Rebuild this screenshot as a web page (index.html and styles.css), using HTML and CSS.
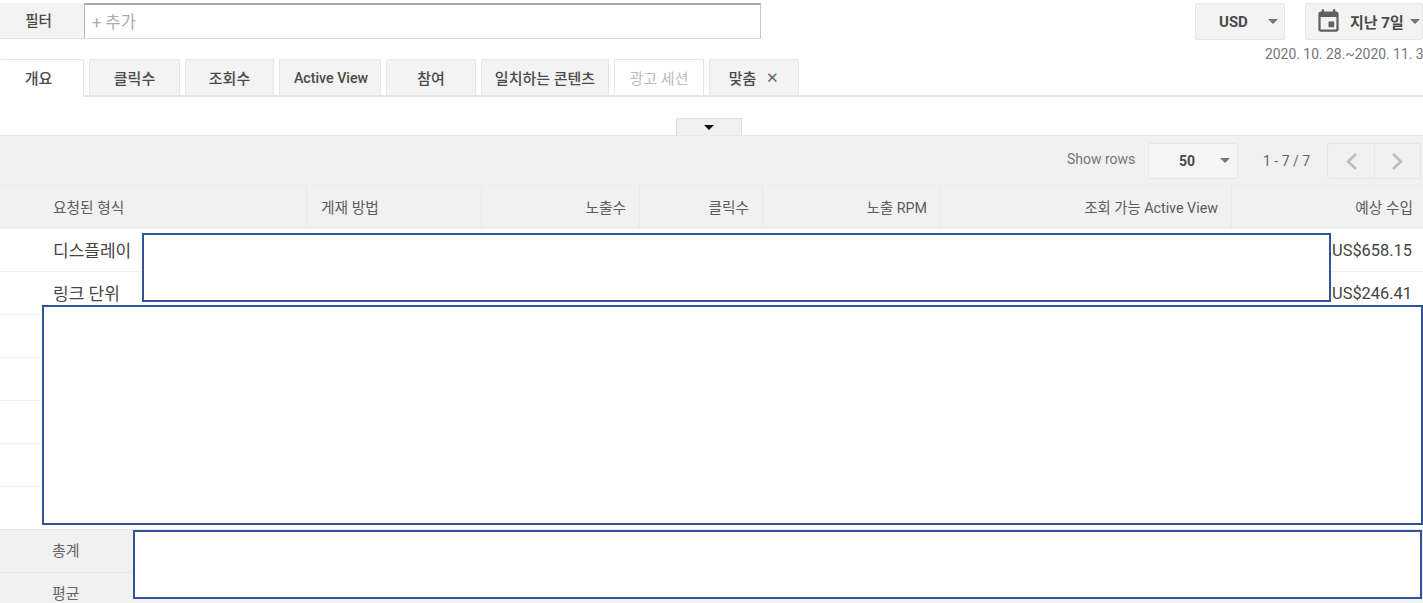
FILE: index.html
```html
<!DOCTYPE html>
<html lang="ko">
<head>
<meta charset="utf-8">
<title>보고서</title>
<link rel="stylesheet" href="styles.css">
</head>
<body>
<div class="page">
  <div class="toolbar">
    <div class="filter-label">필터</div>
    <div class="filter-input">+ 추가</div>
    <div class="toolbar-right">
      <div class="btn btn-usd"><span class="btn-text">USD</span><span class="caret"></span></div>
      <div class="btn btn-date">
        <svg class="cal" viewBox="0 0 24 24" width="27" height="27"><path fill="#616161" d="M17 12h-5v5h5v-5zM16 1v2H8V1H6v2H5c-1.11 0-1.99.9-1.99 2L3 19c0 1.1.89 2 2 2h14c1.1 0 2-.9 2-2V5c0-1.1-.9-2-2-2h-1V1h-2zm3 18H5V8h14v11z"/></svg>
        <span class="btn-text">지난 7일</span><span class="caret"></span>
      </div>
    </div>
  </div>
  <div class="date-range">2020. 10. 28.~2020. 11. 3</div>
  <div class="tabs">
    <div class="tab tab-active w84">개요</div>
    <div class="tab w91">클릭수</div>
    <div class="tab w89">조회수</div>
    <div class="tab tab-latin w102">Active View</div>
    <div class="tab w90">참여</div>
    <div class="tab w128">일치하는 콘텐츠</div>
    <div class="tab tab-disabled w90">광고 세션</div>
    <div class="tab w90">맞춤<span class="tab-x">✕</span></div>
  </div>
  <div class="expander-row"><div class="expander"><span class="caret-dark"></span></div></div>
  <div class="pager">
    <span class="pager-label">Show rows</span>
    <div class="btn btn-rows"><span class="btn-text">50</span><span class="caret"></span></div>
    <span class="pager-count">1 - 7 / 7</span>
    <div class="pager-nav">
      <div class="nav-btn"><svg viewBox="0 0 16 20" width="16" height="20"><path d="M13 3 5 10.500l8 7.500" fill="none" stroke="#bdbdbd" stroke-width="2.600"/></svg></div>
      <div class="nav-btn"><svg viewBox="0 0 16 20" width="16" height="20"><path d="m3 3 8 7.500-8 7.500" fill="none" stroke="#bdbdbd" stroke-width="2.600"/></svg></div>
    </div>
  </div>
  <div class="grid">
    <div class="row head">
      <div class="cell c1">요청된 형식</div><div class="cell c2">게재 방법</div><div class="cell c3 num">노출수</div><div class="cell c4 num">클릭수</div><div class="cell c5 num">노출 RPM</div><div class="cell c6 num">조회 가능 Active View</div><div class="cell c7 num">예상 수입</div>
    </div>
    <div class="row body">
      <div class="cell c1">디스플레이</div><div class="cell c2"></div><div class="cell c3"></div><div class="cell c4"></div><div class="cell c5"></div><div class="cell c6"></div><div class="cell c7 num">US$658.15</div>
    </div>
    <div class="row body">
      <div class="cell c1">링크 단위</div><div class="cell c2"></div><div class="cell c3"></div><div class="cell c4"></div><div class="cell c5"></div><div class="cell c6"></div><div class="cell c7 num">US$246.41</div>
    </div>
    <div class="row body"></div>
    <div class="row body"></div>
    <div class="row body"></div>
    <div class="row body"></div>
    <div class="row body"></div>
    <div class="row foot"><div class="cell c1">총계</div></div>
    <div class="row foot"><div class="cell c1">평균</div></div>
  </div>
  <div class="mask mask-a"></div>
  <div class="mask mask-b"></div>
  <div class="mask mask-c"></div>
</div>
</body>
</html>
```
FILE: styles.css
```css
* { box-sizing: border-box; }
html, body { margin: 0; padding: 0; background: #fff; }
body { font-family: Roboto, "Noto Sans CJK KR", sans-serif; color: #444; overflow: hidden; }
.page { position: relative; width: 1423px; height: 603px; overflow: hidden; }

.toolbar { display: flex; height: 40px; padding-top: 3px; }
.filter-label { width: 84px; height: 36px; background: #f3f3f3; border-bottom: 1px solid #e4e4e4; font-size: 14.500px; font-weight: 500; color: #4a4a4a; display: flex; align-items: center; justify-content: center; padding: 0 7px 2px 0; }
.filter-input { width: 677px; height: 36px; border: 1px solid #c6c6c6; border-top: 2px solid #a8a8a8; border-left-color: #b8b8b8; border-bottom-color: #d8d8d8; font-size: 16.500px; color: #aaa; display: flex; align-items: center; padding: 0 0 2px 7px; background: #fff; }
.toolbar-right { display: flex; margin-left: auto; gap: 20px; }

.btn { display: flex; align-items: center; background: #f3f3f3; border: 1px solid #e6e6e6; border-radius: 2px; height: 37px; }
.btn-text { font-size: 15px; font-weight: 700; color: #4a4a4a; }
.caret { width: 0; height: 0; border-left: 5px solid transparent; border-right: 5px solid transparent; border-top: 5px solid #757575; }
.btn-usd { width: 90px; padding-left: 23px; gap: 20px; }
.btn-date { width: 118px; padding-left: 9px; }
.btn-date .cal { margin-right: 8px; }
.btn-date .caret { margin-left: 6px; }

.date-range { height: 19px; font-size: 13.900px; color: #757575; white-space: nowrap; padding-left: 1265px; line-height: 29px; }

.tabs { display: flex; gap: 5px; height: 38px; border-bottom: 2px solid #e6e6e6; }
.tab { height: 36px; background: #f3f3f3; border: 1px solid #e6e6e6; border-bottom: 0; border-radius: 2px 2px 0 0; font-size: 15px; font-weight: 500; color: #4a4a4a; display: flex; align-items: center; justify-content: center; }
.tab-latin { font-size: 14.200px; padding-left: 2px; }
.tab-active { height: 38px; background: #fff; border-left: 0; position: relative; z-index: 1; padding: 0 6px 2px 0; }
.tab-disabled { background: #fff; color: #bbb; font-weight: 400; }
.tab-x { margin-left: 10px; font-size: 15px; color: #666; font-weight: 400; }
.w84 { width: 84px; }
.w89 { width: 89px; }
.w91 { width: 91px; }
.w90 { width: 90px; }
.w102 { width: 102px; }
.w128 { width: 128px; }

.expander-row { height: 38px; display: flex; align-items: flex-end; padding-left: 676px; }
.expander { width: 66px; height: 17px; background: #f1f1f1; border: 1px solid #dedede; border-bottom: 0; display: flex; align-items: center; justify-content: center; }
.caret-dark { width: 0; height: 0; border-left: 5px solid transparent; border-right: 5px solid transparent; border-top: 5px solid #111; }

.pager { height: 50px; background: #f1f1f1; border-top: 1px solid #e8e8e8; display: flex; align-items: center; padding-left: 1067px; }
.pager-label { font-size: 14px; color: #757575; width: 81px; padding-bottom: 3px; }
.btn-rows { width: 90px; height: 36px; padding-left: 30px; gap: 25px; background: #f5f5f5; }
.btn-rows .btn-text { font-size: 14px; }
.pager-count { font-size: 14px; color: #666; margin-left: 25px; width: 64px; }
.pager-nav { display: flex; height: 36px; border: 1px solid #e6e6e6; border-radius: 2px; }
.nav-btn { width: 46px; display: flex; align-items: center; justify-content: center; }
.nav-btn + .nav-btn { border-left: 1px solid #e6e6e6; }

.grid { display: flex; flex-direction: column; }
.row { display: flex; height: 43px; font-size: 14.700px; }
.cell { display: flex; align-items: center; height: 100%; white-space: nowrap; }
.c1 { width: 307px; padding-left: 53px; }
.c2 { width: 175px; padding-left: 14px; }
.c3 { width: 158px; }
.c4 { width: 123px; }
.c5 { width: 178px; font-size: 14.300px; }
.c6 { width: 291px; font-size: 14.300px; }
.c7 { width: 191px; }
.num { justify-content: flex-end; padding-right: 13px; }

.head { background: #f1f1f1; border-top: 1px solid #ebebeb; color: #5c5c5c; }
.head .cell { border-right: 1px solid #e9e9e9; padding-bottom: 2px; }
.head .c7 { border-right: 0; padding-right: 10px; }
.body { border-top: 1px solid #f1f1f1; background: #fff; font-size: 16.400px; color: #444; }
.body .c1 { font-size: 17px; padding-bottom: 1px; }
.body .c7 { padding-right: 11px; }
.foot { background: #f1f1f1; border-top: 1px solid #e6e6e6; color: #666; }
.foot .cell { padding-bottom: 3px; padding-left: 52px; font-size: 15px; }

.mask { position: absolute; background: #fff; border: 2px solid #2f5597; }
.mask-a { left: 142px; top: 233px; width: 1189px; height: 69px; }
.mask-b { left: 42px; top: 305px; width: 1381px; height: 220px; }
.mask-c { left: 133px; top: 530px; width: 1289px; height: 69px; }
```
